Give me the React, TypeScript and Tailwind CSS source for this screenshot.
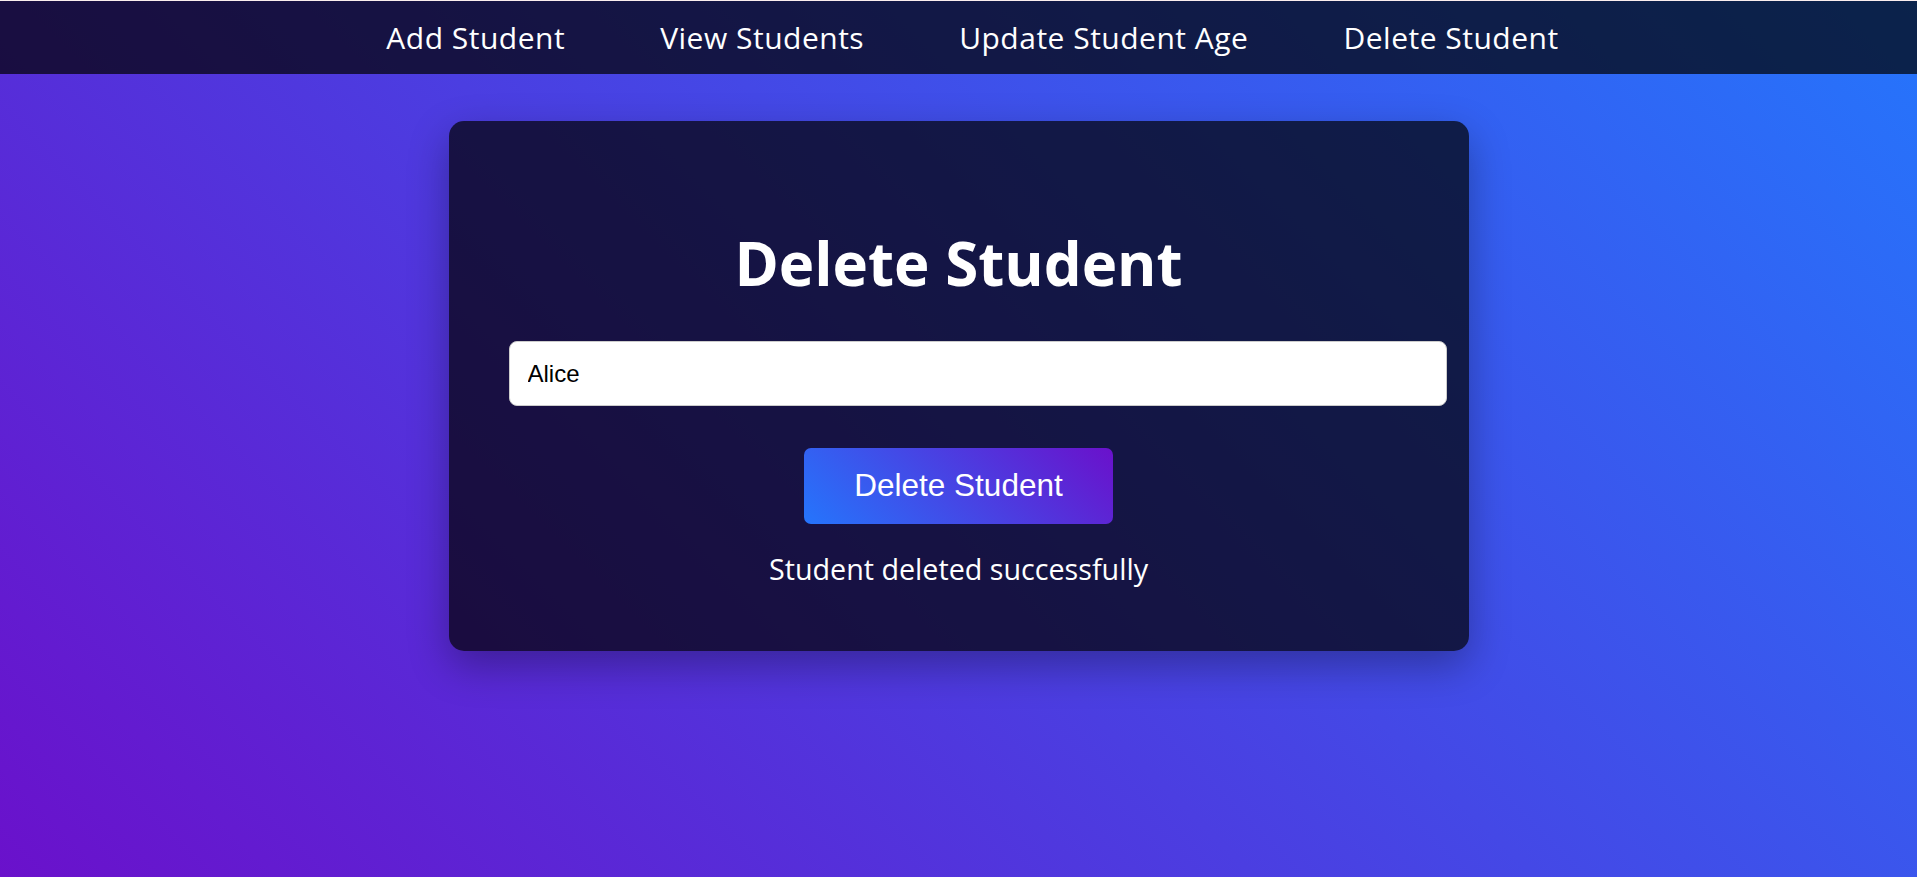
export default function App() {
  const links = ['Add Student', 'View Students', 'Update Student Age', 'Delete Student'];

  return (
    <div className="min-h-screen bg-[linear-gradient(45deg,#6a11cb,#2575fc)] font-['Open_Sans',sans-serif] text-white">
      <div className="h-px bg-[#fbeeee]" />

      {/* Top navigation */}
      <nav className="h-[73px] bg-black/70 flex items-center justify-center gap-[95px] pl-[28px]">
        {links.map((l) => (
          <a key={l} className="text-[30px] tracking-[0.5px] leading-none text-white cursor-pointer">
            {l}
          </a>
        ))}
      </nav>

      {/* Card */}
      <div className="pt-[47px] flex justify-center">
        <div className="w-[1020px] h-[530px] rounded-[15px] bg-black/70 shadow-[0_15px_40px_rgba(0,0,0,0.3)] pl-[60px] pr-[22px] pt-[110px] flex flex-col">
          <h2 className="text-[60px] leading-[64px] font-bold text-center pr-[38px]">Delete Student</h2>

          <input
            value="Alice"
            readOnly
            className="mt-[46px] h-[65px] w-[938px] rounded-[8px] border border-[#cccccc] bg-white px-[18px] text-[24px] text-black font-['Liberation_Sans',Arial,sans-serif] outline-none"
          />

          <div className="flex justify-center pr-[38px] mt-[42px]">
            <button className="h-[76px] w-[309px] rounded-[7px] bg-[linear-gradient(45deg,#2575fc,#6a11cb)] text-[31.5px] text-white font-['Liberation_Sans',Arial,sans-serif]">
              Delete Student
            </button>
          </div>

          <p className="mt-[25px] text-[28.7px] leading-[40px] text-center pr-[38px]">Student deleted successfully</p>
        </div>
      </div>
    </div>
  );
}
